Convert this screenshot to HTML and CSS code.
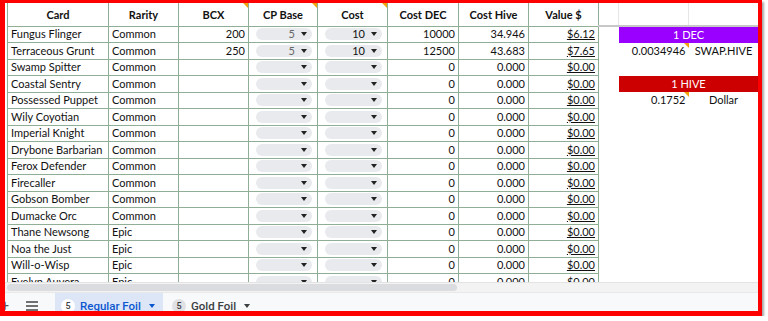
FILE: index.html
```html
<!DOCTYPE html>
<html lang="en">
<head>
  <meta charset="UTF-8">
  <title>Card Values</title>
  <link rel="stylesheet" href="styles.css">
</head>
<body>
  <div class="frame">
    <div class="sheet">
      <div class="grid-wrap">
        <table class="grid">
          <colgroup>
            <col class="c-card"><col class="c-70"><col class="c-70"><col class="c-69"><col class="c-70">
            <col class="c-71"><col class="c-70"><col class="c-70"><col class="c-gap"><col class="c-70"><col class="c-70">
          </colgroup>
          <thead>
            <tr>
              <th>Card</th>
              <th>Rarity</th>
              <th class="note">BCX</th>
              <th class="note">CP Base</th>
              <th class="note">Cost</th>
              <th>Cost DEC</th>
              <th>Cost Hive</th>
              <th>Value $</th>
              <th class="blank"></th>
              <th class="blank"></th>
              <th class="blank"></th>
            </tr>
          </thead>
          <tbody>
            <tr>
              <td>Fungus Flinger</td><td>Common</td><td class="num">200</td>
              <td><span class="chip muted">5</span></td><td><span class="chip">10</span></td>
              <td class="num">10000</td><td class="num">34.946</td><td class="num money">$6.12</td>
              <td class="side"></td><td class="side bar purple" colspan="2">1 DEC</td>
            </tr>
            <tr>
              <td>Terraceous Grunt</td><td>Common</td><td class="num">250</td>
              <td><span class="chip muted">5</span></td><td><span class="chip">10</span></td>
              <td class="num">12500</td><td class="num">43.683</td><td class="num money">$7.65</td>
              <td class="side"></td><td class="side num note">0.0034946</td><td class="side center">SWAP.HIVE</td>
            </tr>
            <tr>
              <td>Swamp Spitter</td><td>Common</td><td></td>
              <td><span class="chip"></span></td><td><span class="chip"></span></td>
              <td class="num">0</td><td class="num">0.000</td><td class="num money">$0.00</td>
              <td class="side"></td><td class="side"></td><td class="side"></td>
            </tr>
            <tr>
              <td>Coastal Sentry</td><td>Common</td><td></td>
              <td><span class="chip"></span></td><td><span class="chip"></span></td>
              <td class="num">0</td><td class="num">0.000</td><td class="num money">$0.00</td>
              <td class="side"></td><td class="side bar red" colspan="2">1 HIVE</td>
            </tr>
            <tr>
              <td>Possessed Puppet</td><td>Common</td><td></td>
              <td><span class="chip"></span></td><td><span class="chip"></span></td>
              <td class="num">0</td><td class="num">0.000</td><td class="num money">$0.00</td>
              <td class="side"></td><td class="side num note">0.1752</td><td class="side center">Dollar</td>
            </tr>
            <tr>
              <td>Wily Coyotian</td><td>Common</td><td></td>
              <td><span class="chip"></span></td><td><span class="chip"></span></td>
              <td class="num">0</td><td class="num">0.000</td><td class="num money">$0.00</td>
              <td class="side"></td><td class="side"></td><td class="side"></td>
            </tr>
            <tr>
              <td>Imperial Knight</td><td>Common</td><td></td>
              <td><span class="chip"></span></td><td><span class="chip"></span></td>
              <td class="num">0</td><td class="num">0.000</td><td class="num money">$0.00</td>
              <td class="side"></td><td class="side"></td><td class="side"></td>
            </tr>
            <tr>
              <td>Drybone Barbarian</td><td>Common</td><td></td>
              <td><span class="chip"></span></td><td><span class="chip"></span></td>
              <td class="num">0</td><td class="num">0.000</td><td class="num money">$0.00</td>
              <td class="side"></td><td class="side"></td><td class="side"></td>
            </tr>
            <tr>
              <td>Ferox Defender</td><td>Common</td><td></td>
              <td><span class="chip"></span></td><td><span class="chip"></span></td>
              <td class="num">0</td><td class="num">0.000</td><td class="num money">$0.00</td>
              <td class="side"></td><td class="side"></td><td class="side"></td>
            </tr>
            <tr>
              <td>Firecaller</td><td>Common</td><td></td>
              <td><span class="chip"></span></td><td><span class="chip"></span></td>
              <td class="num">0</td><td class="num">0.000</td><td class="num money">$0.00</td>
              <td class="side"></td><td class="side"></td><td class="side"></td>
            </tr>
            <tr>
              <td>Gobson Bomber</td><td>Common</td><td></td>
              <td><span class="chip"></span></td><td><span class="chip"></span></td>
              <td class="num">0</td><td class="num">0.000</td><td class="num money">$0.00</td>
              <td class="side"></td><td class="side"></td><td class="side"></td>
            </tr>
            <tr>
              <td>Dumacke Orc</td><td>Common</td><td></td>
              <td><span class="chip"></span></td><td><span class="chip"></span></td>
              <td class="num">0</td><td class="num">0.000</td><td class="num money">$0.00</td>
              <td class="side"></td><td class="side"></td><td class="side"></td>
            </tr>
            <tr>
              <td>Thane Newsong</td><td>Epic</td><td></td>
              <td><span class="chip"></span></td><td><span class="chip"></span></td>
              <td class="num">0</td><td class="num">0.000</td><td class="num money">$0.00</td>
              <td class="side"></td><td class="side"></td><td class="side"></td>
            </tr>
            <tr>
              <td>Noa the Just</td><td>Epic</td><td></td>
              <td><span class="chip"></span></td><td><span class="chip"></span></td>
              <td class="num">0</td><td class="num">0.000</td><td class="num money">$0.00</td>
              <td class="side"></td><td class="side"></td><td class="side"></td>
            </tr>
            <tr>
              <td>Will-o-Wisp</td><td>Epic</td><td></td>
              <td><span class="chip"></span></td><td><span class="chip"></span></td>
              <td class="num">0</td><td class="num">0.000</td><td class="num money">$0.00</td>
              <td class="side"></td><td class="side"></td><td class="side"></td>
            </tr>
            <tr>
              <td>Evelyn Auvera</td><td>Epic</td><td></td>
              <td><span class="chip"></span></td><td><span class="chip"></span></td>
              <td class="num">0</td><td class="num">0.000</td><td class="num money">$0.00</td>
              <td class="side"></td><td class="side"></td><td class="side"></td>
            </tr>
          </tbody>
        </table>
      </div>

      <div class="hscroll"><div class="thumb"></div></div>

      <div class="tabbar">
        <span class="add">+</span>
        <span class="menu">
          <svg width="12" height="10" viewBox="0 0 12 10"><path d="M0 1h12M0 5h12M0 9h12" stroke="#444" stroke-width="1.4"/></svg>
        </span>
        <div class="tab active"><span class="badge">5</span>Regular Foil<span class="caret"></span></div>
        <div class="tab"><span class="badge">5</span>Gold Foil<span class="caret"></span></div>
      </div>
    </div>
  </div>
</body>
</html>
```

FILE: styles.css
```css
body {
  margin: 0;
  background: #fff;
  font-family: Lato, "Liberation Sans", sans-serif;
}

.frame {
  width: 762px;
  height: 316px;
  box-sizing: border-box;
  border-style: solid;
  border-color: #ff0000;
  border-width: 3px 4px 5px 5px;
  box-shadow: 2px 2px 2px rgba(0, 0, 0, 0.35);
}

.sheet {
  height: 100%;
  display: flex;
  flex-direction: column;
  overflow: hidden;
  background: #fff;
}

.grid-wrap {
  height: 279px;
  overflow: hidden;
  padding-left: 2px;
  flex-shrink: 0;
}

.grid {
  border-collapse: collapse;
  table-layout: fixed;
  width: 751px;
  font-size: 11px;
  color: #111;
}

.c-card { width: 101px; }
.c-70 { width: 70px; }
.c-69 { width: 69px; }
.c-71 { width: 71px; }
.c-gap { width: 20px; }

.grid th,
.grid td {
  border: 1px solid #8fae95;
  padding: 0 3px;
  white-space: nowrap;
  overflow: hidden;
  position: relative;
}

.grid th {
  height: 22px;
  font-weight: bold;
  text-align: center;
  border-top: none;
}

.grid th.blank {
  border: none;
  border-right: 1px solid #e6e6e6;
  border-bottom: 2px solid #c8c8c8;
}

.grid td {
  height: 15.5px;
  line-height: 14px;
}

.grid td.num { text-align: right; }

.grid td.money { text-decoration: underline; }

.grid td.side {
  border: none;
}

.grid td.center { text-align: center; }

.grid td.bar {
  color: #fff;
  text-align: center;
}

.purple { background: #9900ff; }
.red { background: #cc0000; }

.note::after {
  content: "";
  position: absolute;
  top: 0;
  right: 0;
  border-top: 5px solid #f0a30a;
  border-left: 5px solid transparent;
}

.chip {
  display: flex;
  justify-content: flex-end;
  align-items: center;
  gap: 6px;
  height: 12px;
  margin: 0 2px 0 4px;
  padding-right: 5px;
  background: #e8eaed;
  border-radius: 6px;
}

.chip::after {
  content: "";
  border-left: 3.5px solid transparent;
  border-right: 3.5px solid transparent;
  border-top: 4px solid #222;
}

.chip.muted { color: #666; }

.hscroll {
  height: 9px;
  background: #f3f3f4;
  border-top: 1px solid #e3e3e3;
  padding-left: 2px;
  display: flex;
  align-items: center;
  flex-shrink: 0;
}

.thumb {
  width: 450px;
  height: 7px;
  border-radius: 4px;
  background: #dadce0;
}

.tabbar {
  flex: 1;
  display: flex;
  align-items: flex-start;
  background: #f8f9fa;
  border-top: 1px solid #e8e8e8;
  font-family: Roboto, "Liberation Sans", sans-serif;
  font-size: 11.5px;
  color: #3c4043;
}

.add,
.menu {
  height: 26px;
  display: flex;
  align-items: center;
  justify-content: center;
}

.add {
  width: 10px;
  margin-left: -5px;
  font-size: 14px;
  color: #555;
}

.menu {
  width: 40px;
  margin-left: 2px;
}

.tab {
  height: 26px;
  display: flex;
  align-items: center;
  gap: 5px;
  padding: 0 8px 0 6px;
  font-weight: 500;
}

.tab.active {
  margin-left: 3px;
  background: #dde6f6;
  color: #0b57d0;
}

.tab.active + .tab {
  padding-left: 9px;
}

.badge {
  width: 14px;
  height: 14px;
  border-radius: 50%;
  background: #dfe1e5;
  color: #3c4043;
  font-size: 9px;
  display: flex;
  align-items: center;
  justify-content: center;
}

.tab.active .badge { background: #fff; }

.caret {
  margin-left: 3px;
  border-left: 3.5px solid transparent;
  border-right: 3.5px solid transparent;
  border-top: 4px solid currentColor;
}
```
